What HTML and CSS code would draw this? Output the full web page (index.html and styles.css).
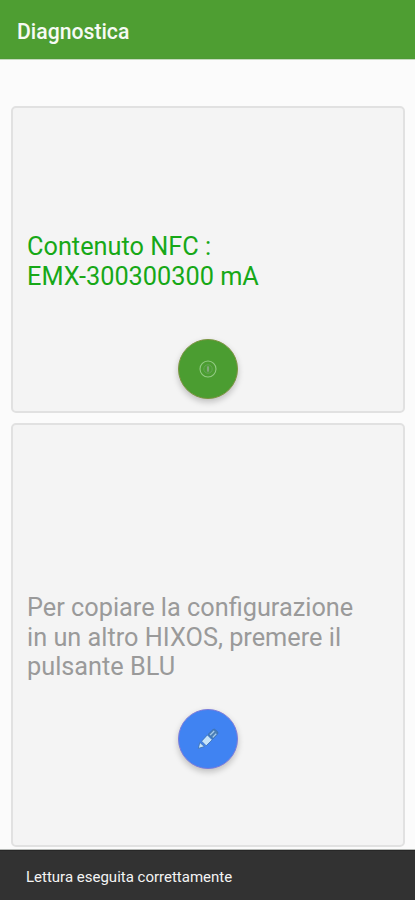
FILE: index.html
```html
<!DOCTYPE html>
<html lang="it">
<head>
    <meta charset="UTF-8">
    <meta name="viewport" content="width=device-width, initial-scale=1.0">
    <title>Diagnostica</title>
    <link rel="stylesheet" href="styles.css">
</head>
<body>
    <header class="toolbar">
        <h1>Diagnostica</h1>
    </header>
    <main class="content">
        <section class="card card-read">
            <p class="message message-ok">Contenuto NFC :<br>EMX-300300300 mA</p>
            <button class="fab fab-green" type="button" aria-label="Leggi">
                <svg width="20" height="20" viewBox="0 0 20 20" fill="none">
                    <circle cx="10" cy="10" r="8" stroke="#93cb84" stroke-width="1.1"/>
                    <circle cx="10" cy="10" r="4.2" stroke="#64a758" stroke-width="1"/>
                    <path d="M10 7.3v5.4" stroke="#82aa7c" stroke-width="2.2"/>
                </svg>
            </button>
        </section>
        <section class="card card-write">
            <p class="message">Per copiare la configurazione<br>in un altro HIXOS, premere il<br>pulsante BLU</p>
            <button class="fab fab-blue" type="button" aria-label="Scrivi">
                <svg width="22" height="22" viewBox="0 0 22 22">
                    <g stroke="#3a70b0" stroke-width="0.8" stroke-linejoin="round">
                        <path d="M1.3 20.4L2.8 14.4L7.4 18.6z" fill="#c5e3fa"/>
                        <path d="M4.6 13.2L10.4 6.9L15.2 11.8L9.2 17.8z" fill="#c5e3fa"/>
                        <path d="M11 6.4L16 1.5Q17.3 0.7 18.4 1.7L20.6 3.9Q21.4 5 20.5 6L15.8 11.1z" fill="#4a7eb6"/>
                    </g>
                    <path d="M13.1 7.1L17.2 3M15.8 9.4L19.2 5.7" stroke="#a5caeb" stroke-width="1.3"/>
                </svg>
            </button>
        </section>
    </main>
    <footer class="snackbar">Lettura eseguita correttamente</footer>
</body>
</html>
```
FILE: styles.css
```css
* {
    box-sizing: border-box;
}
body {
    margin: 0;
    height: 900px;
    display: flex;
    flex-direction: column;
    font-family: Roboto, "Liberation Sans", sans-serif;
    background-color: #fbfbfb;
    overflow: hidden;
}
.toolbar {
    height: 59px;
    flex: none;
    display: flex;
    align-items: center;
    padding: 5px 17px 0;
    background-color: #4e9e32;
    border-bottom: 1px solid #4e9a35;
    box-shadow: 0 1px 0 #c5dabd;
}
.toolbar h1 {
    margin: 0;
    font-size: 21.2px;
    font-weight: 500;
    color: #f6faf4;
}
.content {
    flex: 1;
    display: flex;
    flex-direction: column;
    gap: 10px;
    padding: 47px 10px 3px 11px;
}
.card {
    display: flex;
    flex-direction: column;
    align-items: center;
    padding: 0 14px;
    background-color: #f4f4f4;
    border: 2px solid #e1e1e1;
    border-radius: 5px;
}
.card-read {
    height: 307px;
    padding-top: 124px;
}
.card-write {
    flex: 1;
    padding-top: 168px;
}
.message {
    align-self: stretch;
    margin: 0;
    font-size: 25.3px;
    line-height: 29.5px;
    white-space: nowrap;
    color: #9a9a9a;
}
.message-ok {
    color: #17a817;
}
.fab {
    width: 60px;
    height: 60px;
    padding: 0;
    display: flex;
    align-items: center;
    justify-content: center;
    border: none;
    border-radius: 50%;
    box-shadow: 0 3px 6px rgba(0, 0, 0, 0.22);
}
.fab-green {
    margin-top: 48px;
    background-color: #4b9d31;
    border: 1px solid #7c9440;
}
.fab-blue {
    margin-top: 27px;
    background-color: #4083f2;
    border: 1px solid #7c7bdc;
}
.snackbar {
    height: 50px;
    flex: none;
    display: flex;
    align-items: center;
    padding: 2px 26px 0;
    font-size: 15px;
    color: #f4f4f4;
    background-color: #323232;
    border-top: 1px solid #272727;
    box-shadow: 0 -1px 0 #b5b8b5;
}
```
